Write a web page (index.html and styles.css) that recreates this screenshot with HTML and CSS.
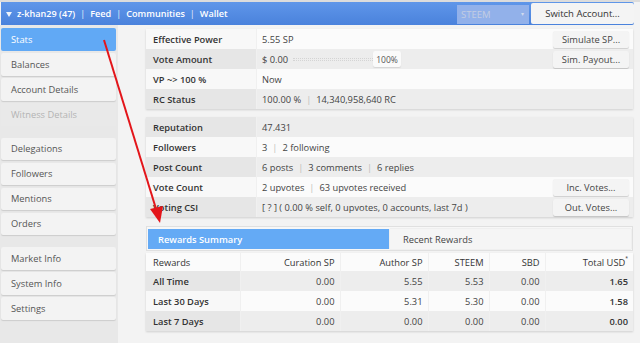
FILE: index.html
```html
<!DOCTYPE html>
<html>
<head>
<meta charset="utf-8">
<link rel="stylesheet" href="styles.css">
</head>
<body>
<div class="topbar">
  <div class="nav">
    <span class="caret"></span>
    <span class="nav-link">z-khan29 (47)</span><span class="bar">|</span>
    <span class="nav-link">Feed</span><span class="bar">|</span>
    <span class="nav-link">Communities</span><span class="bar">|</span>
    <span class="nav-link">Wallet</span>
  </div>
  <div class="top-right">
    <div class="select"><span class="sel-text">STEEM</span><span class="sel-arrow">&#9662;</span></div>
    <div class="switch">Switch Account...</div>
  </div>
</div>
<div class="main">
  <div class="sidebar">
    <div class="group">
      <div class="item active">Stats</div>
      <div class="item">Balances</div>
      <div class="item">Account Details</div>
      <div class="item disabled">Witness Details</div>
    </div>
    <div class="group">
      <div class="item">Delegations</div>
      <div class="item">Followers</div>
      <div class="item">Mentions</div>
      <div class="item">Orders</div>
    </div>
    <div class="group">
      <div class="item">Market Info</div>
      <div class="item">System Info</div>
      <div class="item">Settings</div>
    </div>
  </div>
  <div class="content">
    <div class="panel">
      <div class="row light">
        <div class="lbl">Effective Power</div>
        <div class="val"><span>5.55 SP</span><span class="btn">Simulate SP...</span></div>
      </div>
      <div class="row dark">
        <div class="lbl">Vote Amount</div>
        <div class="val">
          <span class="amt">$ 0.00</span>
          <span class="track"></span>
          <span class="pct">100%</span>
          <span class="spacer"></span>
          <span class="btn">Sim. Payout...</span>
        </div>
      </div>
      <div class="row light">
        <div class="lbl">VP ~&gt; 100 %</div>
        <div class="val"><span>Now</span></div>
      </div>
      <div class="row dark">
        <div class="lbl">RC Status</div>
        <div class="val"><span>100.00 %<span class="sep">|</span>14,340,958,640 RC</span></div>
      </div>
    </div>
    <div class="panel">
      <div class="row dark">
        <div class="lbl">Reputation</div>
        <div class="val"><span>47.431</span></div>
      </div>
      <div class="row light">
        <div class="lbl">Followers</div>
        <div class="val"><span>3<span class="sep">|</span>2 following</span></div>
      </div>
      <div class="row dark">
        <div class="lbl">Post Count</div>
        <div class="val"><span>6 posts<span class="sep">|</span>3 comments<span class="sep">|</span>6 replies</span></div>
      </div>
      <div class="row light">
        <div class="lbl">Vote Count</div>
        <div class="val"><span>2 upvotes<span class="sep">|</span>63 upvotes received</span><span class="btn">Inc. Votes...</span></div>
      </div>
      <div class="row dark">
        <div class="lbl">Voting CSI</div>
        <div class="val"><span>[ ? ] ( 0.00 % self, 0 upvotes, 0 accounts, last 7d )</span><span class="btn">Out. Votes...</span></div>
      </div>
    </div>
    <div class="tabs">
      <div class="tab active">Rewards Summary</div>
      <div class="tab">Recent Rewards</div>
    </div>
    <table class="rewards">
      <colgroup>
        <col class="c1"><col class="c2"><col class="c3"><col class="c4"><col class="c5"><col class="c6">
      </colgroup>
      <thead>
        <tr><th class="first">Rewards</th><th>Curation SP</th><th>Author SP</th><th>STEEM</th><th>SBD</th><th>Total USD<sup>*</sup></th></tr>
      </thead>
      <tbody>
        <tr class="dark"><td class="first">All Time</td><td>0.00</td><td>5.55</td><td>5.53</td><td>0.00</td><td class="bold">1.65</td></tr>
        <tr class="light"><td class="first">Last 30 Days</td><td>0.00</td><td>5.31</td><td>5.30</td><td>0.00</td><td class="bold">1.58</td></tr>
        <tr class="dark"><td class="first">Last 7 Days</td><td>0.00</td><td>0.00</td><td>0.00</td><td>0.00</td><td class="bold">0.00</td></tr>
      </tbody>
    </table>
  </div>
</div>
<svg class="arrow" width="640" height="343" viewBox="0 0 640 343">
  <line x1="104" y1="40" x2="157" y2="212" stroke="#e3151a" stroke-width="2"/>
  <polygon points="160,223 150,209 163,206" fill="#e3151a"/>
</svg>
</body>
</html>
```

FILE: styles.css
```css
* { box-sizing: border-box; }
html, body { margin: 0; padding: 0; }
body {
  width: 640px;
  height: 343px;
  overflow: hidden;
  background: #f3f3f3;
  font-family: "Open Sans", "Liberation Sans", sans-serif;
  font-size: 9.3px;
  color: #444;
  position: relative;
  border-top: 2px solid #dcdcdc;
}
.topbar {
  width: 633px;
  height: 23px;
  margin-left: 1px;
  background: linear-gradient(#5f96e9, #4a82dc);
  border-radius: 0 2px 2px 0;
  display: flex;
  justify-content: space-between;
  align-items: center;
}
.nav {
  display: flex;
  align-items: center;
  color: #fff;
  font-weight: 600;
  font-size: 9.1px;
  padding-left: 5px;
}
.caret {
  width: 0; height: 0;
  border-left: 3.5px solid transparent;
  border-right: 3.5px solid transparent;
  border-top: 5px solid #eef3fb;
  margin-right: 5px;
  margin-top: 1px;
}
.bar { margin: 0 5px; font-weight: 400; color: #e8effa; }
.top-right { display: flex; align-items: center; height: 100%; }
.select {
  width: 72px;
  height: 19px;
  margin-top: 1px;
  background: #92b1ea;
  font-size: 9.5px;
  padding-left: 4px;
  display: flex;
  align-items: center;
  justify-content: space-between;
  padding-right: 5px;
}
.sel-text { color: #c3cde2; }
.sel-arrow { font-size: 6px; color: #d0dbef; }
.switch {
  width: 103px;
  height: 21px;
  margin-left: 2px;
  background: #f4f4f4;
  border-radius: 2px;
  color: #333;
  font-size: 9.5px;
  display: flex;
  align-items: center;
  justify-content: center;
}
.main { display: flex; }
.sidebar {
  width: 118px;
  height: 318px;
  background: #e8e8e8;
  padding: 3px 0 0 1px;
  display: flex;
  flex-direction: column;
  gap: 12px;
}
.group { display: flex; flex-direction: column; gap: 2.5px; }
.item {
  width: 115px;
  height: 22.5px;
  flex: none;
  background: #f3f3f3;
  box-shadow: 0 1px 1px rgba(0,0,0,0.12);
  border-radius: 2px;
  padding-left: 10px;
  display: flex;
  align-items: center;
  color: #555;
}
.item.active { background: #61a9f5; color: #fff; box-shadow: none; }
.item.disabled { background: #e9e9e9; color: #b4b4b4; box-shadow: none; }
.content {
  margin-left: 28px;
  width: 487px;
  padding-top: 4px;
}
.panel {
  background: #fff;
  box-shadow: 0 1px 2px rgba(0,0,0,0.15);
  margin-bottom: 8px;
}
.row { display: flex; height: 20px; }
.lbl {
  width: 111px;
  padding-left: 7px;
  display: flex;
  align-items: center;
  font-weight: 600;
  color: #333;
  border-right: 1px solid #f0f0f0;
}
.val {
  flex: 1;
  display: flex;
  align-items: center;
  justify-content: space-between;
  padding-left: 5px;
  padding-right: 4px;
}
.row.light .lbl { background: #f8f8f8; }
.row.light .val { background: #fbfbfb; }
.row.dark .lbl { background: #e6e6e6; }
.row.dark .val { background: #ededed; }
.sep { color: #bbb; margin: 0 5px; }
.btn {
  width: 76px;
  height: 17px;
  background: #f4f4f4;
  box-shadow: 0 1px 1px rgba(0,0,0,0.18);
  border-radius: 2px;
  display: flex;
  align-items: center;
  justify-content: center;
  color: #444;
}
.amt { width: 31px; }
.track {
  width: 80px;
  height: 3px;
  border-top: 1px dotted #d4d4d4;
  border-bottom: 1px dotted #d4d4d4;
}
.pct {
  width: 28px;
  height: 16px;
  background: #fafafa;
  box-shadow: 0 1px 1px rgba(0,0,0,0.1);
  border-radius: 2px;
  font-size: 8.5px;
  display: flex;
  align-items: center;
  justify-content: center;
  color: #555;
}
.spacer { flex: 1; }
.tabs {
  margin-top: 9px;
  height: 25px;
  border: 1px solid #e0e0e0;
  background: #f7f7f7;
  padding: 2px 1px;
  display: flex;
}
.tab {
  height: 20px;
  display: flex;
  align-items: center;
  padding-left: 10px;
  color: #444;
}
.tab.active {
  width: 241px;
  background: #64aaf5;
  color: #fff;
  font-weight: 600;
}
.tab:not(.active) {
  flex: 1;
  margin-left: 1px;
  padding-left: 13px;
  background: #f5f5f5;
  box-shadow: 0 0 1px rgba(0,0,0,0.2);
}
.rewards {
  margin-top: 2px;
  width: 487px;
  border-collapse: collapse;
  table-layout: fixed;
  background: #fff;
  box-shadow: 0 1px 2px rgba(0,0,0,0.15);
}
.c1 { width: 94px; }
.c2 { width: 100px; }
.c3 { width: 88px; }
.c4 { width: 61px; }
.c5 { width: 56px; }
.c6 { width: 88px; }
.rewards th, .rewards td {
  height: 20px;
  padding: 0 5px 0 0;
  text-align: right;
  font-weight: 400;
  color: #444;
  border-left: 1px solid #f0f0f0;
}
.rewards th { height: 18px; background: #fbfbfb; color: #333; }
.rewards .first {
  text-align: left;
  padding-left: 7px;
  font-weight: 600;
  color: #333;
  border-left: none;
}
.rewards th.first { font-weight: 400; }
.rewards sup { font-size: 5px; vertical-align: top; position: relative; top: -1px; }
.rewards tr.dark td { background: #ededed; }
.rewards tr.dark td.first { background: #e6e6e6; }
.rewards tr.light td { background: #fbfbfb; }
.rewards tr.light td.first { background: #f8f8f8; }
.rewards td.bold { font-weight: 600; color: #333; }
.arrow { position: absolute; left: 0; top: -2px; pointer-events: none; }
```
